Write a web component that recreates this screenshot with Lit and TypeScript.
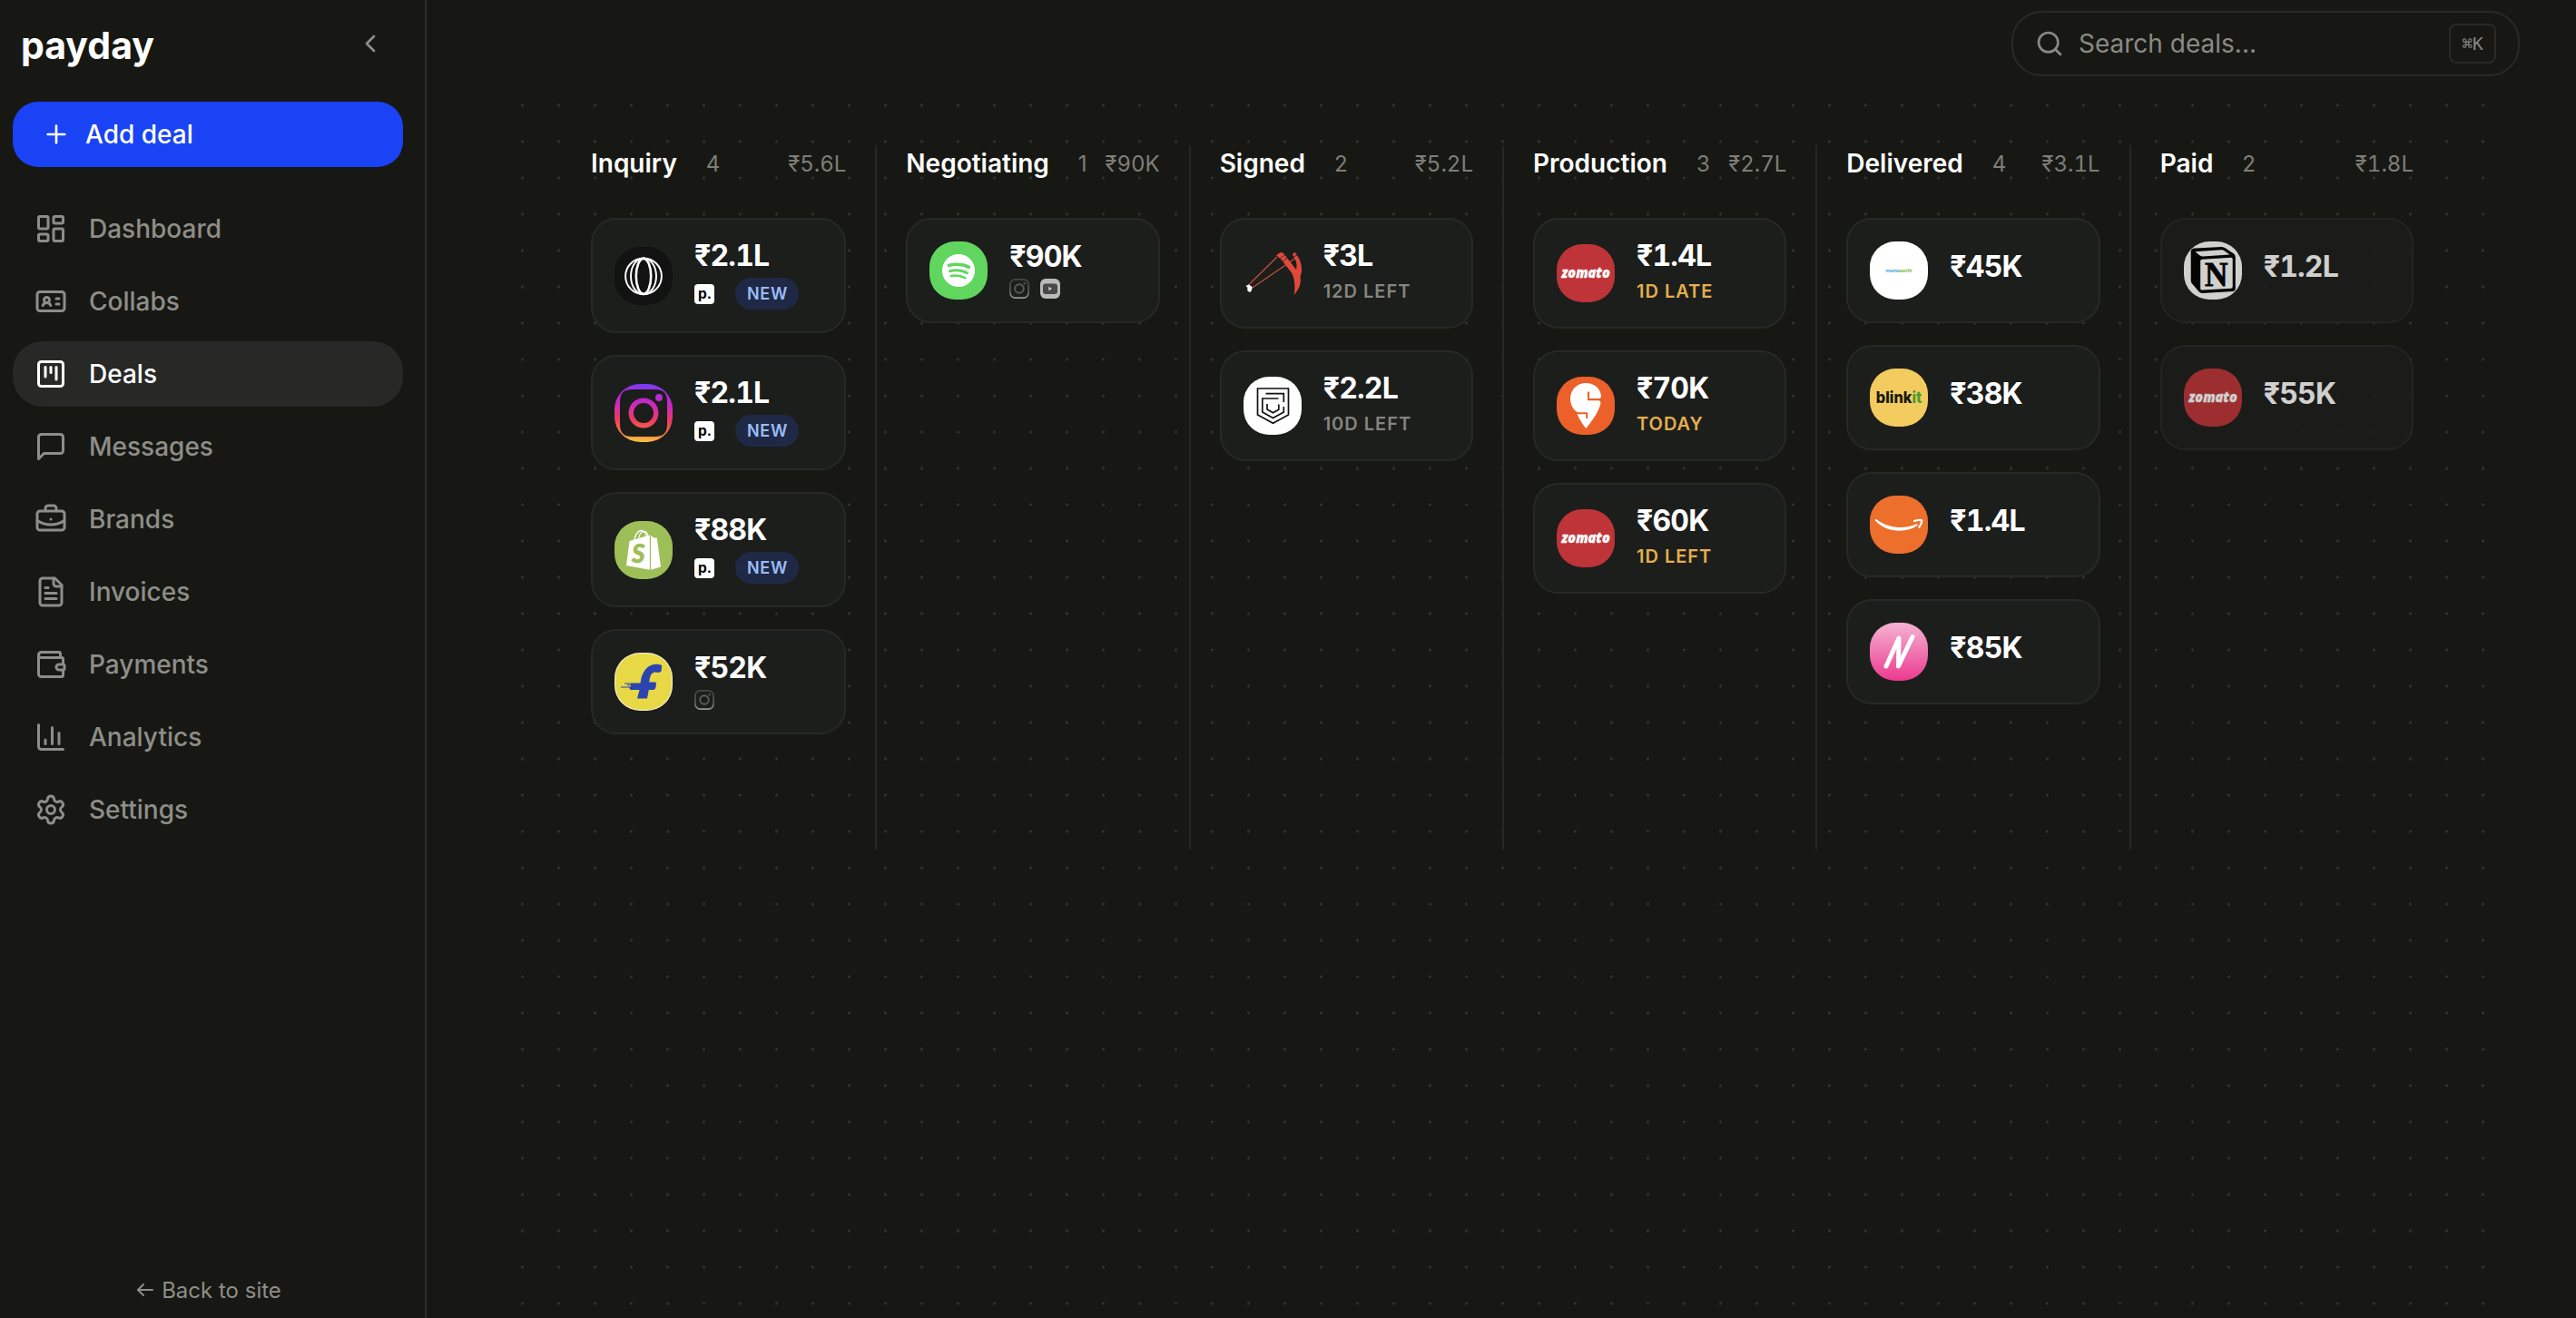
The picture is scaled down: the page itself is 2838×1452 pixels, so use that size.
import { LitElement, html, css, svg, nothing } from "lit";
import { customElement, property } from "lit/decorators.js";

const ICONS: Record<string, unknown> = {
  dashboard: svg`<rect width="7" height="9" x="3" y="3" rx="1"/><rect width="7" height="5" x="14" y="3" rx="1"/><rect width="7" height="9" x="14" y="12" rx="1"/><rect width="7" height="5" x="3" y="16" rx="1"/>`,
  collabs: svg`<path d="M16 10h2"/><path d="M16 14h2"/><path d="M6.17 15a3 3 0 0 1 5.66 0"/><circle cx="9" cy="11" r="2"/><rect x="2" y="5" width="20" height="14" rx="2"/>`,
  deals: svg`<rect width="18" height="18" x="3" y="3" rx="2"/><path d="M8 7v7"/><path d="M12 7v4"/><path d="M16 7v9"/>`,
  messages: svg`<path d="M21 15a2 2 0 0 1-2 2H7l-4 4V5a2 2 0 0 1 2-2h14a2 2 0 0 1 2 2z"/>`,
  brands: svg`<path d="M12 12h.01"/><path d="M16 6V4a2 2 0 0 0-2-2h-4a2 2 0 0 0-2 2v2"/><path d="M22 13a18.15 18.15 0 0 1-20 0"/><rect width="20" height="14" x="2" y="6" rx="2"/>`,
  invoices: svg`<path d="M15 2H6a2 2 0 0 0-2 2v16a2 2 0 0 0 2 2h12a2 2 0 0 0 2-2V7Z"/><path d="M14 2v4a2 2 0 0 0 2 2h4"/><path d="M10 9H8"/><path d="M16 13H8"/><path d="M16 17H8"/>`,
  payments: svg`<path d="M19 7V4a1 1 0 0 0-1-1H5a2 2 0 0 0 0 4h15a1 1 0 0 1 1 1v4h-3a2 2 0 0 0 0 4h3a1 1 0 0 0 1-1v-2a1 1 0 0 0-1-1"/><path d="M3 5v14a2 2 0 0 0 2 2h15a1 1 0 0 0 1-1v-4"/>`,
  analytics: svg`<path d="M3 3v16a2 2 0 0 0 2 2h16"/><path d="M18 17V9"/><path d="M13 17V5"/><path d="M8 17v-3"/>`,
  settings: svg`<path d="M9.671 4.136a2.34 2.34 0 0 1 4.659 0 2.34 2.34 0 0 0 3.319 1.915 2.34 2.34 0 0 1 2.33 4.033 2.34 2.34 0 0 0 0 3.831 2.34 2.34 0 0 1-2.33 4.033 2.34 2.34 0 0 0-3.319 1.915 2.34 2.34 0 0 1-4.659 0 2.34 2.34 0 0 0-3.32-1.915 2.34 2.34 0 0 1-2.33-4.033 2.34 2.34 0 0 0 0-3.831A2.34 2.34 0 0 1 6.35 6.051a2.34 2.34 0 0 0 3.319-1.915"/><circle cx="12" cy="12" r="3"/>`,
  plus: svg`<path d="M5 12h14"/><path d="M12 5v14"/>`,
  chevron: svg`<path d="m15 18-6-6 6-6"/>`,
  search: svg`<circle cx="11" cy="11" r="8"/><path d="m21 21-4.3-4.3"/>`,
  arrow: svg`<path d="m10 6-6 6 6 6"/><path d="M4 12h16"/>`,
};

const BRANDS: Record<string, unknown> = {
  opera: svg`<rect width="64" height="64" fill="#111211"/>
    <g fill="none" stroke="#fff" stroke-width="2"><circle cx="32" cy="32.3" r="19.9"/><ellipse cx="32" cy="32.3" rx="14" ry="19.9"/><ellipse cx="32" cy="32.3" rx="8.2" ry="19.4" stroke-width="2.6"/></g>`,
  instagram: svg`<defs><linearGradient id="ig" x1="0.4" y1="0" x2="0.35" y2="1"><stop offset="0" stop-color="#7a3df2"/><stop offset=".14" stop-color="#a92be0"/><stop offset=".38" stop-color="#cf2bb4"/><stop offset=".62" stop-color="#ec3c5e"/><stop offset=".82" stop-color="#f4703c"/><stop offset="1" stop-color="#f8c945"/></linearGradient></defs>
    <path fill="url(#ig)" fill-rule="evenodd" d="M0 0H64V64H0ZM20 6C10 6 6 10 6 20V44C6 54 10 58 20 58H44C54 58 58 54 58 44V20C58 10 54 6 44 6ZM32 15.5A16.5 16.5 0 1 1 32 48.500A16.500 16.500 0 1 1 32 15.500M32 21A11 11 0 1 0 32 43A11 11 0 1 0 32 21M49 11A4 4 0 1 1 49 19A4 4 0 1 1 49 11"/>`,
  shopify: svg`<rect width="64" height="64" fill="#9ebf58"/>
    <path fill="#fff" d="M16.500 22 38.800 15.500V53.700L13 49Z"/><path fill="#fff" d="M40 15.800 43 18.300 46.800 18.800 51 50.500 40 53.700Z"/>
    <g fill="none" stroke="#fff" stroke-width="1.300"><path d="M22 21C22.500 15 26 10.500 29.500 10.500S35 14 35 18"/><path d="M26.500 20C27 15 29.500 11.500 32.500 11.500S36.500 14 37 17"/></g>
    <text x="19" y="46" font-family="Lato, sans-serif" font-style="italic" font-weight="900" font-size="29" fill="#9ebf58" stroke="#9ebf58" stroke-width="0.600" textLength="14.500" lengthAdjust="spacingAndGlyphs">S</text>`,
  flipkart: svg`<rect width="64" height="64" fill="#f3ecc4"/><rect x="1.200" y="1.200" width="61.600" height="61.600" rx="27" fill="#e8d846"/>
    <path fill="#2c45ae" d="M25 50.500 27.500 41H17.500L16 38.500H7V37.500H18V36.300H14V35.300H18V34.400H11V33.400H28.500C30 22 35 14 45 12.800Q51 12.200 52.200 14.500L51.500 20.500Q50 22.500 45 21.600C40.500 21.800 39 26 38.300 32.600H45.500Q46.500 36 44.800 39.800Q44 41 42 41H37.800L36 50.500Z"/>`,
  spotify: svg`<rect width="64" height="64" fill="#61d65f"/><circle cx="32" cy="32" r="18" fill="#fff"/>
    <g fill="none" stroke="#61d65f" stroke-linecap="round"><path stroke-width="3.600" d="M21.500 26.300Q34 23.500 43.500 28.300"/><path stroke-width="3" d="M22.500 32.600Q33 30 41.500 34.800"/><path stroke-width="2.400" d="M23.500 38Q32 36.300 39.500 40.300"/></g>`,
  slingshot: svg`<g fill="none" stroke="#c9523f" stroke-width="1.100"><path d="M4.500 46 37 14"/><path d="M9 48.500 58 15"/></g>
    <path fill="#e0493a" d="M36 12 41 9Q44 9 46 12.500L58 28Q59.500 22 57 17L54 12 56 8.500 59.500 10 64 21Q65 29 62.500 36 64 44 60 50L55.500 57.500Q57 49 56 42 55.500 34 51 29L42 17.500Z"/>
    <path stroke="#1c1e1c" stroke-width="0.700" fill="none" d="M40 16 46 11.500M43 19 49 14.500M54 14 60 12"/>
    <path fill="#fff" d="M2.500 46 6 44.500 9.500 47 9 51 7 53 4 51.500 4.500 48Z"/>`,
  cred: svg`<rect width="64" height="64" fill="#fefefe"/>
    <g fill="none" stroke="#111" stroke-width="1.700"><path d="M15.500 13H49.500V42L32.500 51.300 15.500 42Z"/><path d="M24.500 18.700H44.300V28"/><path d="M38.500 24H20.800V39L32.500 45.500 44.300 39V33"/><path d="M26 30V36L32.500 39.800 38.800 36.300V30.500"/></g>`,
  zomato: svg`<rect width="64" height="64" fill="#bf3438"/>
    <text x="5.300" y="36.800" font-family="Open Sans, sans-serif" font-style="italic" font-weight="800" font-size="15.800" fill="#fff" stroke="#fff" stroke-width="0.300" textLength="53.500" lengthAdjust="spacingAndGlyphs">zomato</text>`,
  swiggy: svg`<rect width="64" height="64" fill="#ec602a"/>
    <path fill="#fff" d="M32 7C41 7 48 12.500 49 21Q49.300 23.500 47 23.900H36V16.500H34V26.300H46.500Q49 26.800 48.300 30C46 39 39.500 48 32.300 57 29 53 25 47 22.500 41.200H32.200V46H34.200V39.200H23C17 36 15 29 15 24 15 14 23 7 32 7Z"/>`,
  mamaearth: svg`<rect width="64" height="64" fill="#fff"/>
    <text x="17.500" y="33.800" font-family="Inter, sans-serif" font-weight="700" font-size="5.400" fill="#43a6dc" textLength="29" lengthAdjust="spacingAndGlyphs">mama<tspan fill="#7dbb42">earth</tspan></text>`,
  blinkit: svg`<rect width="64" height="64" fill="#f3cc5f"/>
    <text x="6.800" y="38" font-family="Inter, sans-serif" font-weight="800" font-size="17.500" fill="#17180f" textLength="50.500" lengthAdjust="spacingAndGlyphs">blink<tspan fill="#4b9a33">it</tspan></text>`,
  amazon: svg`<rect width="64" height="64" fill="#ec6f2c"/>
    <path fill="#fff" d="M5.500 26.300Q6.500 25.500 8 26.700C22 36.500 39 37 51.500 31.300Q53.500 31.300 52.300 33C40 41.500 18 41 6 27.500Z"/>
    <path fill="none" stroke="#fff" stroke-width="2.200" stroke-linecap="round" stroke-linejoin="round" d="M49 28Q54 26.300 57.300 27.300 57.300 31 54.300 34.800"/>`,
  nykaa: svg`<defs><linearGradient id="ny" x1="0" y1="0" x2="0" y2="1"><stop offset="0" stop-color="#f4b3d2"/><stop offset="1" stop-color="#ec3a90"/></linearGradient></defs>
    <rect width="64" height="64" fill="url(#ny)"/>
    <path fill="none" stroke="#fff" stroke-width="5" stroke-linejoin="round" stroke-linecap="round" d="M18 48 32 17 31.500 48 47 15.500"/>`,
  notion: svg`<rect width="64" height="64" fill="#fff"/>
    <path fill="#000" d="M9 8.500Q10 7.500 12 7.500L41.500 6Q44 6 46 7.500L55 13.500Q56.800 15 56.800 17V52Q56.800 54.700 54.500 54.900L20.500 56.900Q18 57 16.500 55.200L9 46.500Q7.700 45 7.700 43V11Q7.700 9.200 9 8.500Z"/>
    <path fill="#fff" d="M12.500 11.300 41 9.300Q43 9.200 44.500 10.200L50.500 14.600 20.500 16.400Q18.500 16.400 17.300 15.300ZM20 19.700 52 17.800Q53.700 17.800 53.700 19.500V50Q53.700 51.500 52 51.700L20 53.600Q18.200 53.600 18.200 52V21.500Q18.200 19.800 20 19.700Z"/>
    <text x="23" y="49" font-family="Liberation Serif, serif" font-weight="700" font-size="38" fill="#000" stroke="#000" stroke-width="0.800" textLength="25.500" lengthAdjust="spacingAndGlyphs">N</text>`,
};

interface Deal { brand: string; amount: string; due?: string; tone?: string; tags?: string[]; isNew?: boolean }
interface Stage { name: string; total: string; faded?: boolean; deals: Deal[] }

const STAGES: Stage[] = [
  { name: "Inquiry", total: "₹5.6L", deals: [
    { brand: "opera", amount: "₹2.1L", tags: ["p"], isNew: true },
    { brand: "instagram", amount: "₹2.1L", tags: ["p"], isNew: true },
    { brand: "shopify", amount: "₹88K", tags: ["p"], isNew: true },
    { brand: "flipkart", amount: "₹52K", tags: ["ig"] },
  ] },
  { name: "Negotiating", total: "₹90K", deals: [{ brand: "spotify", amount: "₹90K", tags: ["ig", "yt"] }] },
  { name: "Signed", total: "₹5.2L", deals: [
    { brand: "slingshot", amount: "₹3L", due: "12D LEFT" },
    { brand: "cred", amount: "₹2.2L", due: "10D LEFT" },
  ] },
  { name: "Production", total: "₹2.7L", deals: [
    { brand: "zomato", amount: "₹1.4L", due: "1D LATE", tone: "warn" },
    { brand: "swiggy", amount: "₹70K", due: "TODAY", tone: "warn" },
    { brand: "zomato", amount: "₹60K", due: "1D LEFT", tone: "warn" },
  ] },
  { name: "Delivered", total: "₹3.1L", deals: [
    { brand: "mamaearth", amount: "₹45K" },
    { brand: "blinkit", amount: "₹38K" },
    { brand: "amazon", amount: "₹1.4L" },
    { brand: "nykaa", amount: "₹85K" },
  ] },
  { name: "Paid", total: "₹1.8L", faded: true, deals: [
    { brand: "notion", amount: "₹1.2L" },
    { brand: "zomato", amount: "₹55K" },
  ] },
];

@customElement("line-icon")
class LineIcon extends LitElement {
  @property() name = "";
  static styles = css`
    :host { display: block; flex: none; width: 36px; height: 36px; }
    svg { display: block; width: 100%; height: 100%; fill: none; stroke: currentColor; stroke-width: 2; stroke-linecap: round; stroke-linejoin: round; }
  `;
  render() {
    return html`<svg viewBox="0 0 24 24">${ICONS[this.name]}</svg>`;
  }
}

@customElement("side-nav")
class SideNav extends LitElement {
  static styles = css`
    :host { display: flex; flex-direction: column; box-sizing: border-box; width: 470px; height: 1452px; padding: 0 24px 0 14px; border-right: 2px solid #2c2d2a; color: #8e8e89; font-size: 28px; font-weight: 500; }
    .top { display: flex; align-items: center; justify-content: space-between; height: 96px; margin-bottom: 16px; padding: 0 20px 0 9px; }
    .logo { color: #fff; font-size: 41px; font-weight: 700; letter-spacing: 0; line-height: 48px; padding-top: 4px; }
    .small { width: 32px; height: 32px; }
    .add { display: flex; align-items: center; gap: 16px; box-sizing: border-box; height: 72px; padding-left: 32px; border-radius: 28px; background: #1a43f6; color: #fff; }
    nav { display: flex; flex-direction: column; gap: 8px; margin-top: 32px; }
    .item { display: flex; align-items: center; gap: 24px; height: 72px; padding-left: 24px; border-radius: 33px; }
    .active { background: #282927; color: #fff; }
    .back { display: flex; align-items: center; justify-content: center; gap: 6px; margin-top: auto; height: 36px; margin-bottom: 13px; font-size: 24px; font-weight: 400; }
    .tiny { width: 24px; height: 24px; }
  `;
  render() {
    const items = ["Dashboard", "Collabs", "Deals", "Messages", "Brands", "Invoices", "Payments", "Analytics", "Settings"];
    return html`
      <div class="top"><span class="logo">payday</span><line-icon class="small" name="chevron"></line-icon></div>
      <div class="add"><line-icon class="small" name="plus"></line-icon><span>Add deal</span></div>
      <nav>${items.map((t) => html`<div class="item ${t === "Deals" ? "active" : ""}"><line-icon name=${t.toLowerCase()}></line-icon><span>${t}</span></div>`)}</nav>
      <div class="back"><line-icon class="tiny" name="arrow"></line-icon><span>Back to site</span></div>
    `;
  }
}

@customElement("deal-card")
class DealCard extends LitElement {
  @property({ attribute: false }) deal!: Deal;
  static styles = css`
    :host { display: flex; align-items: center; gap: 24px; box-sizing: border-box; padding: 24px; border: 2px solid #272925; border-radius: 28px; background: #1c1e1c; }
    .avatar { display: block; flex: none; width: 64px; height: 64px; border-radius: 28px; }
    .amount { margin-bottom: 8px; color: #fff; font-size: 32px; line-height: 32px; font-weight: 700; letter-spacing: -0.8px; font-variant-numeric: tabular-nums; }
    .due { color: #85857f; font-size: 20px; line-height: 30px; font-weight: 600; letter-spacing: 1px; }
    .warn { color: #e5ae4e; }
    .tags { display: flex; align-items: center; gap: 12px; }
    .tag { display: block; width: 22px; height: 22px; }
    .pill { margin-left: 11px; padding: 4px 12px 4px 13px; border-radius: 18px; background: #1f2946; color: #9cbcf5; font-size: 18px; line-height: 27px; font-weight: 600; letter-spacing: 0.700px; }
  `;
  private tag(kind: string) {
    if (kind === "p")
      return html`<svg class="tag" viewBox="0 0 22 22"><rect width="22" height="22" rx="4" fill="#fff"/><text x="4" y="16" font-family="Inter, sans-serif" font-weight="700" font-size="15.500" fill="#000">p.</text></svg>`;
    if (kind === "ig")
      return html`<svg class="tag" viewBox="0 0 22 22" fill="none"><defs><linearGradient id="g" x1="0" y1="0" x2="0" y2="1"><stop offset="0" stop-color="#454745"/><stop offset=".6" stop-color="#5a5c5a"/><stop offset="1" stop-color="#969896"/></linearGradient></defs><rect x=".9" y=".9" width="20.200" height="20.200" rx="5.500" stroke="url(#g)" stroke-width="1.600"/><circle cx="11" cy="11" r="4.800" stroke="#5a5c5a" stroke-width="1.900"/><circle cx="16.800" cy="5.200" r="1.300" fill="#4d4f4d"/></svg>`;
    return html`<svg class="tag" viewBox="0 0 22 22"><rect width="22" height="22" rx="6" fill="#b9bab9"/><rect x="3" y="5.500" width="16" height="11.500" rx="3" fill="#484948"/><path d="M9.300 8.700 13 11 9.300 13.300Z" fill="#d0d1d0"/></svg>`;
  }
  render() {
    const d = this.deal;
    return html`
      <svg class="avatar" viewBox="0 0 64 64">${BRANDS[d.brand]}</svg>
      <div>
        <div class="amount">${d.amount}</div>
        ${d.due ? html`<div class="due ${d.tone ?? ""}">${d.due}</div>` : nothing}
        ${d.tags ? html`<div class="tags">${d.tags.map((t) => this.tag(t))}${d.isNew ? html`<span class="pill">NEW</span>` : nothing}</div>` : nothing}
      </div>
    `;
  }
}

@customElement("deal-board")
class DealBoard extends LitElement {
  static styles = css`
    :host { display: block; box-sizing: border-box; width: 2200px; height: 1356px; margin-left: 85px; padding: 64px 64px 0 64px; background: radial-gradient(circle at 20.500px 20px, #32332f 0.900px, transparent 2.100px) 0 0 / 40px 40px; }
    .columns { display: grid; grid-template-columns: repeat(6, 1fr); height: 776px; }
    .col { box-sizing: border-box; min-width: 0; padding: 0 32px; border-left: 2px solid #272825; }
    .col:first-child { border-left: none; }
    .head { display: flex; align-items: center; height: 40px; margin-bottom: 40px; color: #7e7e79; font-size: 24px; white-space: nowrap; }
    .name { margin-right: 32px; color: #fff; font-size: 28px; font-weight: 600; }
    .total { margin-left: auto; font-variant-numeric: tabular-nums; }
    .list { display: flex; flex-direction: column; gap: 24px; }
    .faded { opacity: 0.8; }
  `;
  render() {
    return html`<div class="columns">${STAGES.map((s) => html`
      <section class="col">
        <div class="head"><span class="name">${s.name}</span><span>${s.deals.length}</span><span class="total">${s.total}</span></div>
        <div class="list">${s.deals.map((d) => html`<deal-card class=${s.faded ? "faded" : ""} .deal=${d}></deal-card>`)}</div>
      </section>`)}</div>`;
  }
}

@customElement("app-root")
class AppRoot extends LitElement {
  static styles = css`
    :host { display: flex; width: 2838px; height: 1452px; overflow: hidden; background: #171813; font-family: Inter, "Liberation Sans", sans-serif; }
    main { flex: 1; min-width: 0; }
    header { display: flex; justify-content: flex-end; align-items: center; box-sizing: border-box; height: 96px; padding-right: 62px; }
    .search { display: flex; align-items: center; box-sizing: border-box; width: 560px; height: 72px; padding: 0 24px; border: 2px solid #292a27; border-radius: 33px; color: #8a8a85; font-size: 28px; }
    .glass { width: 32px; height: 32px; margin-right: 16px; }
    .key { display: flex; align-items: center; justify-content: center; box-sizing: border-box; width: 52px; height: 44px; margin-left: auto; border: 2px solid #292a27; border-radius: 8px; font-family: "DejaVu Sans Mono", "Liberation Mono", monospace; font-size: 19.500px; }
  `;
  render() {
    return html`
      <side-nav></side-nav>
      <main>
        <header><div class="search"><line-icon class="glass" name="search"></line-icon><span>Search deals...</span><span class="key">⌘K</span></div></header>
        <deal-board></deal-board>
      </main>
    `;
  }
}
